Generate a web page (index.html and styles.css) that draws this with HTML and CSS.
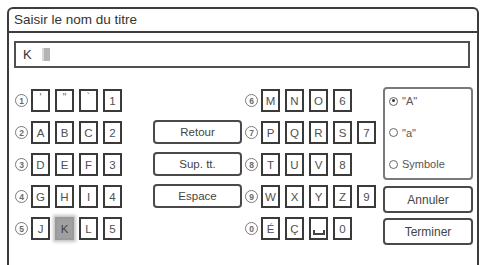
FILE: index.html
```html
<!DOCTYPE html>
<html lang="fr">
<head>
<meta charset="utf-8">
<title>Saisir le nom du titre</title>
<link rel="stylesheet" href="styles.css">
</head>
<body>
<div class="frame">
  <div class="title">Saisir le nom du titre</div>
  <div class="input"><span class="typed">K</span><span class="cursor"></span></div>
  <div class="pad">
    <div class="block">
      <div class="row"><span class="num">1</span><span class="key q">'</span><span class="key q">"</span><span class="key q">`</span><span class="key">1</span></div>
      <div class="row"><span class="num">2</span><span class="key">A</span><span class="key">B</span><span class="key">C</span><span class="key">2</span></div>
      <div class="row"><span class="num">3</span><span class="key">D</span><span class="key">E</span><span class="key">F</span><span class="key">3</span></div>
      <div class="row"><span class="num">4</span><span class="key">G</span><span class="key">H</span><span class="key">I</span><span class="key">4</span></div>
      <div class="row"><span class="num">5</span><span class="key">J</span><span class="key sel">K</span><span class="key">L</span><span class="key">5</span></div>
    </div>
    <div class="mid">
      <div class="btn">Retour</div>
      <div class="btn">Sup. tt.</div>
      <div class="btn">Espace</div>
    </div>
    <div class="block right">
      <div class="row"><span class="num">6</span><span class="key">M</span><span class="key">N</span><span class="key">O</span><span class="key">6</span></div>
      <div class="row"><span class="num">7</span><span class="key">P</span><span class="key">Q</span><span class="key">R</span><span class="key">S</span><span class="key">7</span></div>
      <div class="row"><span class="num">8</span><span class="key">T</span><span class="key">U</span><span class="key">V</span><span class="key">8</span></div>
      <div class="row"><span class="num">9</span><span class="key">W</span><span class="key">X</span><span class="key">Y</span><span class="key">Z</span><span class="key">9</span></div>
      <div class="row"><span class="num">0</span><span class="key">É</span><span class="key">Ç</span><span class="key"><span class="space"></span></span><span class="key">0</span></div>
    </div>
    <div class="side">
      <div class="radios">
        <div class="radio"><span class="dot on"></span>"A"</div>
        <div class="radio"><span class="dot"></span>"a"</div>
        <div class="radio"><span class="dot"></span>Symbole</div>
      </div>
      <div class="btn wide">Annuler</div>
      <div class="btn wide">Terminer</div>
    </div>
  </div>
</div>
</body>
</html>
```
FILE: styles.css
```css
html, body {
  margin: 0;
  padding: 0;
  background: #fff;
}
body {
  font-family: "Liberation Sans", Arial, sans-serif;
  color: #3a3a3a;
}
.frame {
  box-sizing: border-box;
  margin: 7px 0 0 7px;
  width: 472px;
  height: 258px;
  border: 2px solid #3c3c3c;
  border-bottom: none;
  border-radius: 6px 6px 0 0;
}
.title {
  height: 22px;
  line-height: 22px;
  padding-left: 5px;
  font-size: 13.5px;
  color: #333;
  border-bottom: 2px solid #3c3c3c;
}
.input {
  box-sizing: border-box;
  margin: 8px 7px 0 5px;
  height: 27px;
  border: 2px solid #505050;
  display: flex;
  align-items: center;
  padding-left: 7px;
  font-size: 13px;
}
.typed {
  color: #333;
}
.cursor {
  display: inline-block;
  width: 6px;
  height: 13px;
  margin-left: 10px;
  background: #b4b4b4;
  border-left: 2px solid #d8d8d8;
}
.pad {
  display: flex;
  margin-top: 21px;
  padding-left: 6px;
}
.block {
  display: flex;
  flex-direction: column;
  gap: 9px;
  width: 109px;
  flex-shrink: 0;
}
.right {
  width: 133px;
  margin-left: 3px;
}
.row {
  display: flex;
  align-items: center;
  gap: 5px;
  height: 23px;
}
.num {
  box-sizing: border-box;
  width: 13px;
  height: 13px;
  margin-right: -2px;
  border: 1.5px solid #7a7a7a;
  border-radius: 50%;
  display: flex;
  align-items: center;
  justify-content: center;
  font-size: 8.5px;
  font-weight: bold;
  color: #6a6a6a;
  flex-shrink: 0;
}
.key {
  box-sizing: border-box;
  width: 19px;
  height: 23px;
  border: 2px solid #3a3a3a;
  display: flex;
  align-items: center;
  justify-content: center;
  font-size: 11.5px;
  color: #505050;
  flex-shrink: 0;
}
.key.q {
  align-items: flex-start;
  font-size: 10px;
  padding-top: 1px;
  color: #666;
}
.key.sel {
  border-color: #9a9a9a;
  background: #a0a0a0;
  box-shadow: 0 0 3px 2px #c4c4c4;
  color: #444;
}
.space {
  display: block;
  width: 8px;
  height: 3px;
  margin-top: 8px;
  border: 2px solid #444;
  border-top: none;
}
.mid {
  display: flex;
  flex-direction: column;
  gap: 8px;
  margin-top: 31px;
  margin-left: 29px;
  flex-shrink: 0;
}
.btn {
  box-sizing: border-box;
  width: 89px;
  height: 24px;
  border: 2px solid #4a4a4a;
  border-radius: 4px;
  display: flex;
  align-items: center;
  justify-content: center;
  font-size: 11.5px;
  color: #444;
}
.side {
  display: flex;
  flex-direction: column;
  gap: 5px;
  margin-left: 5px;
  margin-top: -2px;
  flex-shrink: 0;
}
.radios {
  box-sizing: border-box;
  width: 90px;
  height: 93px;
  border: 2px solid #7a7a7a;
  border-radius: 4px;
  display: flex;
  flex-direction: column;
  justify-content: space-between;
  padding: 6px 0 8px 4px;
  margin-bottom: 1px;
}
.radio {
  display: flex;
  align-items: center;
  gap: 4px;
  font-size: 11px;
  color: #555;
}
.dot {
  box-sizing: border-box;
  width: 9px;
  height: 9px;
  border: 1.5px solid #666;
  border-radius: 50%;
  position: relative;
}
.dot.on::after {
  content: "";
  position: absolute;
  left: 1.5px;
  top: 1.5px;
  width: 3px;
  height: 3px;
  border-radius: 50%;
  background: #333;
}
.btn.wide {
  width: 90px;
  height: 27px;
  font-size: 12px;
}
```
